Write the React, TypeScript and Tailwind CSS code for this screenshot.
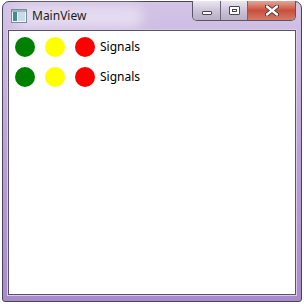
import React from 'react';

const rows = [0, 1];

function AppIcon() {
  return (
    <svg width="16" height="14" viewBox="0 0 16 14">
      <rect x="0.5" y="0.5" width="15" height="13" fill="#f4f6f8" stroke="#7c8a96" />
      <rect x="2" y="3" width="4" height="9" fill="#3f8f8a" />
      <rect x="7" y="3" width="7" height="9" fill="#c9dbe8" />
      <rect x="1" y="1" width="14" height="2" fill="#9fb3c4" />
    </svg>
  );
}

export default function App() {
  return (
    <div className="w-[304px] h-[304px] bg-white pl-[2px] pt-[1px]" style={{ fontFamily: '"Noto Sans", "Open Sans", sans-serif' }}>
      <div className="relative w-[300px] h-[301px] rounded-t-[7px] rounded-b-[3px] border border-[#4a4458] bg-gradient-to-b from-[#d3c4e6] via-[#b9a1d6] to-[#a98bcb] flex flex-col px-[5px] pb-[6px]">
        {/* title glow */}
        <div className="absolute left-[10px] top-[4px] w-[130px] h-[22px] rounded-full bg-[#efe8f5] opacity-70 blur-[6px]" />

        {/* title bar */}
        <div className="relative h-[28px] flex items-center pl-[3px] gap-[5px]">
          <AppIcon />
          <span className="text-[12px] text-[#1b1b1b] leading-none">MainView</span>
        </div>

        {/* caption buttons */}
        <div className="absolute top-[-1px] left-[189px] flex h-[20px] rounded-b-[5px] border border-t-0 border-[#5b5468] overflow-hidden">
          <div className="w-[28px] h-full flex items-center justify-center bg-gradient-to-b from-[#ebe6f0] via-[#cdc4d8] to-[#b8aec6] border-r border-[#6b647a]">
            <div className="w-[10px] h-[4px] mt-[5px] bg-white border border-[#4a4552] rounded-[1px]" />
          </div>
          <div className="w-[27px] h-full flex items-center justify-center bg-gradient-to-b from-[#ebe6f0] via-[#cdc4d8] to-[#b8aec6] border-r border-[#6b647a]">
            <div className="w-[11px] h-[9px] bg-white border border-[#4a4552] rounded-[1px] flex items-center justify-center">
              <div className="w-[5px] h-[3px] border border-[#4a4552]" />
            </div>
          </div>
          <div className="w-[47px] h-full flex items-center justify-center bg-gradient-to-b from-[#e4a394] via-[#c94f3c] to-[#d27a66]">
            <svg width="14" height="11" viewBox="0 0 14 11">
              <path d="M2 1.5 L12 9.5 M12 1.5 L2 9.5" stroke="#3a2a2a" strokeWidth="4" strokeLinecap="round" />
              <path d="M2 1.5 L12 9.5 M12 1.5 L2 9.5" stroke="#ffffff" strokeWidth="2.4" strokeLinecap="round" />
            </svg>
          </div>
        </div>

        {/* client area */}
        <div className="relative flex-1 bg-white border border-[#5a5268] shadow-[0_0_0_1px_#d9cce8] pl-[6px] pt-[6px] flex flex-col gap-[10px]">
          {rows.map(r => (
            <div key={r} className="flex items-center gap-[10px] h-[20px]">
              <div className="w-[20px] h-[20px] rounded-full bg-[#008000]" />
              <div className="w-[20px] h-[20px] rounded-full bg-[#ffff00]" />
              <div className="w-[20px] h-[20px] rounded-full bg-[#ff0000]" />
              <span className="text-[12px] text-black -ml-[5px]">Signals</span>
            </div>
          ))}
        </div>
      </div>
    </div>
  );
}
